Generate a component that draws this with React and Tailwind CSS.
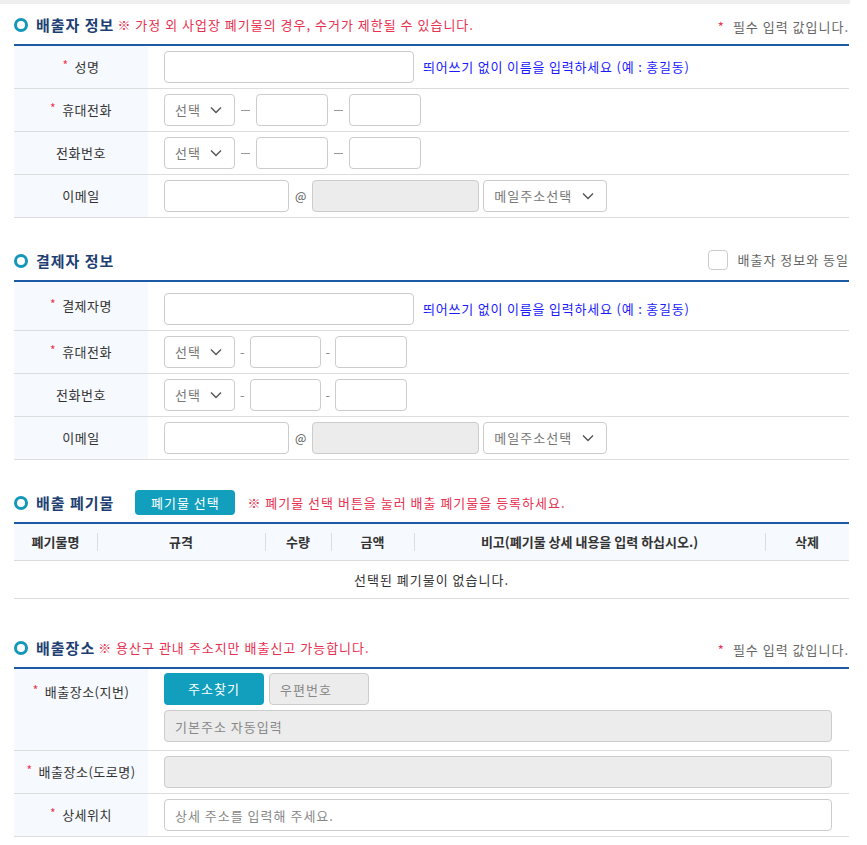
import React from 'react';

const FONT = { fontFamily: '"Noto Sans CJK KR", "Noto Sans", sans-serif' };

function Star() {
  return <span className="text-[#f0334f] mr-[6px] text-[12px] relative top-[-2px]">*</span>;
}

function Chevron() {
  return (
    <svg width="12" height="8" viewBox="0 0 12 8" fill="none" stroke="#555" strokeWidth="1.4">
      <path d="M1 1.5l5 5 5-5" />
    </svg>
  );
}

function SectionHeader({ title, note, right, first }) {
  return (
    <div className={`flex items-center h-[42px] pt-px border-b-2 border-[#1c5ba3] ${first ? '' : 'mt-[22px]'}`}>
      <span className="w-[14px] h-[14px] rounded-full border-[3px] border-[#1497b9] mr-[8px] shrink-0" />
      <h2 className="text-[15px] font-bold tracking-[1px] text-[#1e3f73] leading-none">{title}</h2>
      {note && <span className="text-[13px] tracking-[1px] text-[#e8304f] ml-[3px] leading-none">{note}</span>}
      <div className="ml-auto">{right}</div>
    </div>
  );
}

function Required() {
  return (
    <span className="text-[13px] tracking-[1px] text-[#666] leading-none">
      <span className="text-[#f0334f] mr-[8px]">*</span>필수 입력 값입니다.
    </span>
  );
}

function Label({ children, req, top }) {
  return (
    <div
      className={`w-[134px] shrink-0 bg-[#f6f9fd] flex justify-center text-[13px] tracking-[0.5px] text-[#333] ${
        top ? 'items-start pt-[13px]' : 'items-center'
      }`}
    >
      <span className="whitespace-nowrap">
        {req && <Star />}
        {children}
      </span>
    </div>
  );
}

function Row({ label, req, top, className = 'py-[5px]', children }) {
  return (
    <div className="flex border-b border-[#dddddd]">
      <Label req={req} top={top}>{label}</Label>
      <div className={`flex-1 pl-4 pr-[17px] ${className}`}>{children}</div>
    </div>
  );
}

function Input({ w, gray, placeholder }) {
  return (
    <input
      readOnly
      placeholder={placeholder}
      className={`h-8 rounded-[4px] border border-[#cccccc] px-[10px] text-[13px] tracking-[1px] outline-none placeholder:text-[#888] ${
        gray ? 'bg-[#ececec]' : 'bg-white'
      } ${w}`}
    />
  );
}

function Select({ w, label, chevronGap }) {
  return (
    <div className={`h-8 rounded-[4px] border border-[#cccccc] bg-white flex items-center pl-[10px] text-[13px] tracking-[1px] text-[#777] ${w}`}>
      <span>{label}</span>
      <span className={chevronGap}><Chevron /></span>
    </div>
  );
}

function PhoneRow({ label, req, dash }) {
  const long = dash === 'long';
  const Dash = () =>
    long ? (
      <span className="w-[9px] h-px bg-[#999] mx-[6px]" />
    ) : (
      <span className="text-[13px] text-[#888] mx-[5px]">-</span>
    );
  return (
    <Row label={label} req={req}>
      <div className="flex items-center">
        <Select w="w-[71px]" label="선택" chevronGap="ml-[9px]" />
        <Dash />
        <Input w={long ? 'w-[72px]' : 'w-[71px]'} />
        <Dash />
        <Input w="w-[72px]" />
      </div>
    </Row>
  );
}

function EmailRow() {
  return (
    <Row label="이메일">
      <div className="flex items-center">
        <Input w="w-[125px]" />
        <span className="text-[12px] text-[#555] mx-[6px]">@</span>
        <Input w="w-[167px]" gray />
        <div className="ml-[4px]">
          <Select w="w-[124px]" label="메일주소선택" chevronGap="ml-[10px]" />
        </div>
      </div>
    </Row>
  );
}

function NameRow({ label, className }) {
  return (
    <Row label={label} req className={className}>
      <div className="flex items-center">
        <Input w="w-[250px]" />
        <span className="ml-[9px] text-[13px] tracking-[0.8px] text-[#1a1aff] whitespace-nowrap">
          띄어쓰기 없이 이름을 입력하세요 (예 : 홍길동)
        </span>
      </div>
    </Row>
  );
}

const COLS = [
  { name: '폐기물명', w: 'w-[83px]' },
  { name: '규격', w: 'w-[168px]' },
  { name: '수량', w: 'w-[66px]' },
  { name: '금액', w: 'w-[83px]' },
  { name: '비고(폐기물 상세 내용을 입력 하십시오.)', w: 'w-[351px]' },
  { name: '삭제', w: 'flex-1' },
];

export default function App() {
  return (
    <div className="bg-white min-h-[845px] text-[#333]" style={FONT}>
      <div className="h-[4px] w-[850px] bg-[#efefef]" />
      <div className="ml-[14px] w-[835px]">
        {/* 배출자 정보 */}
        <SectionHeader
          first
          title="배출자 정보"
          note="※ 가정 외 사업장 폐기물의 경우, 수거가 제한될 수 있습니다."
          right={<Required />}
        />
        <NameRow label="성명" />
        <PhoneRow label="휴대전화" req dash="long" />
        <PhoneRow label="전화번호" dash="long" />
        <EmailRow />

        {/* 결제자 정보 */}
        <SectionHeader
          title="결제자 정보"
          right={
            <label className="flex items-center text-[13px] tracking-[1px] text-[#666] mb-[2px]">
              <span className="w-[20px] h-[20px] rounded-[4px] border border-[#cccccc] bg-white mr-[9px]" />
              배출자 정보와 동일
            </label>
          }
        />
        <NameRow label="결제자명" className="pt-[11px] pb-[5px]" />
        <PhoneRow label="휴대전화" req />
        <PhoneRow label="전화번호" />
        <EmailRow />

        {/* 배출 폐기물 */}
        <div className="flex items-center h-[42px] pt-px border-b-2 border-[#1c5ba3] mt-[22px]">
          <span className="w-[14px] h-[14px] rounded-full border-[3px] border-[#1497b9] mr-[8px] shrink-0" />
          <h2 className="text-[15px] font-bold tracking-[1px] text-[#1e3f73] leading-none">배출 폐기물</h2>
          <button className="ml-[21px] h-[25px] w-[100px] rounded-[4px] bg-[#119fbd] text-white text-[13px] tracking-[1px]">
            폐기물 선택
          </button>
          <span className="ml-[12px] text-[13px] tracking-[1px] text-[#e8304f]">※ 폐기물 선택 버튼을 눌러 배출 폐기물을 등록하세요.</span>
        </div>
        <div className="flex h-[37px] items-center bg-[#f6f9fd] border-b border-[#dddddd] text-[13px] font-bold text-[#333]">
          {COLS.map((c, i) => (
            <div key={i} className={`${c.w} relative h-full flex items-center justify-center`}>
              {i > 0 && <span className="absolute left-0 top-[9px] h-[18px] w-px bg-[#dddddd]" />}
              {c.name}
            </div>
          ))}
        </div>
        <div className="h-[38px] flex items-center justify-center border-b border-[#dddddd] text-[13px] tracking-[1px] text-[#333]">
          선택된 폐기물이 없습니다.
        </div>

        {/* 배출장소 */}
        <div className="mt-[28px]">
          <SectionHeader first title="배출장소" note="※ 용산구 관내 주소지만 배출신고 가능합니다." right={<Required />} />
        </div>
        <Row label="배출장소(지번)" req top className="pt-[4px] pb-[8px]">
          <div className="flex items-center gap-[5px]">
            <button className="h-8 w-[100px] rounded-[4px] bg-[#119fbd] text-white text-[13px] tracking-[1px]">주소찾기</button>
            <Input w="w-[100px]" gray placeholder="우편번호" />
          </div>
          <div className="mt-[5px]">
            <Input w="w-full" gray placeholder="기본주소 자동입력" />
          </div>
        </Row>
        <Row label="배출장소(도로명)" req>
          <Input w="w-full" gray />
        </Row>
        <Row label="상세위치" req>
          <Input w="w-full" placeholder="상세 주소를 입력해 주세요." />
        </Row>
      </div>
    </div>
  );
}
